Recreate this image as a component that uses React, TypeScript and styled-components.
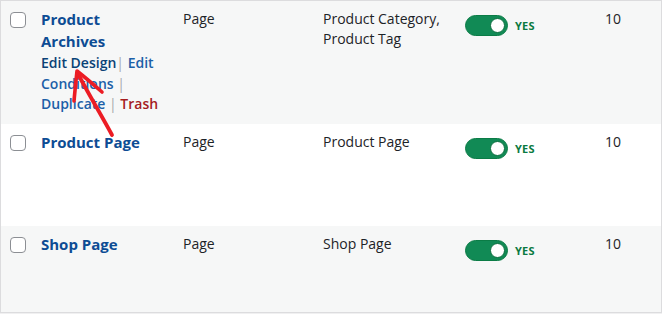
import styled, { createGlobalStyle } from 'styled-components';

const GlobalStyle = createGlobalStyle`
  html, body {
    margin: 0;
    padding: 0;
    background: #f0f0f1;
  }
  body {
    font-family: "Open Sans", "Noto Sans", Arial, sans-serif;
    color: #1d2327;
  }
`;

interface Template {
  title: string,
  type: string,
  conditions: string,
  priority: number,
  height: number,
  striped: boolean,
  actions?: boolean
}

const templates: Template[] = [
  {
    title: 'Product Archives', type: 'Page',
    conditions: 'Product Category, Product Tag',
    priority: 10, height: 123, striped: true, actions: true
  },
  {
    title: 'Product Page', type: 'Page', conditions: 'Product Page',
    priority: 10, height: 102, striped: false
  },
  {
    title: 'Shop Page', type: 'Page', conditions: 'Shop Page',
    priority: 10, height: 86, striped: true
  }
];

function Toggle(){
  return (
    <ToggleWrap>
      <Track><Knob /></Track>
      <YesLabel>YES</YesLabel>
    </ToggleWrap>
  );
}

function RowActions(){
  return (
    <Actions>
      <ActionLink is_active>Edit Design</ActionLink><Sep>| </Sep>
      <ActionLink>Edit Conditions</ActionLink><Sep> | </Sep>
      <ActionLink>Duplicate</ActionLink><Sep> | </Sep>
      <ActionLink is_danger>Trash</ActionLink>
    </Actions>
  );
}

// hand drawn red arrow pointing at "Edit Design"
function Arrow(){
  return (
    <ArrowSvg width="662" height="314" viewBox="0 0 662 314">
      <path
        d="M112 135 C 104 120, 92 100, 78 74"
        fill="none" stroke="#ec1c24" strokeWidth="3.8" strokeLinecap="round"
      />
      <path
        d="M74 101 C 75 90, 76 80, 77 71 C 86 78, 94 85, 102 92"
        fill="none" stroke="#ec1c24" strokeWidth="3.6"
        strokeLinecap="round" strokeLinejoin="round"
      />
    </ArrowSvg>
  );
}

export default function App(){
  return (
    <>
      <GlobalStyle />
      <Page>
        <Table>
          {templates.map((t) => (
            <Row key={t.title} striped={t.striped} height={t.height}>
              <CheckCell><Checkbox /></CheckCell>
              <TitleCell>
                <Title>{t.title}</Title>
                {t.actions && <RowActions />}
              </TitleCell>
              <Cell>{t.type}</Cell>
              <Cell>{t.conditions}</Cell>
              <Cell><Toggle /></Cell>
              <Cell>{t.priority}</Cell>
            </Row>
          ))}
        </Table>
        <Arrow />
      </Page>
    </>
  );
}

const Page = styled.div`
  position: relative;
  width: 662px;
  height: 314px;
  overflow: hidden;
`;
const Table = styled.div`
  border: 1px solid #dcdcde;
  display: flex;
  flex-direction: column;
`;
const Row = styled.div((props: { striped: boolean, height: number }) => `
  display: grid;
  grid-template-columns: 40px 142px 140px 142px 140px 1fr;
  height: ${props.height}px;
  box-sizing: border-box;
  background: ${props.striped ? '#f6f7f7' : '#ffffff'};
  font-size: 14px;
  line-height: 20px;
`);
const Cell = styled.div`
  padding-top: 8px;
`;
const CheckCell = styled.div`
  padding: 11px 0 0 9px;
`;
const Checkbox = styled.div`
  width: 14px;
  height: 14px;
  border: 1px solid #8c8f94;
  border-radius: 4px;
  background: #fff;
`;
const TitleCell = styled.div`
  padding: 7px 18px 0 0;
`;
const Title = styled.div`
  font-size: 15px;
  font-weight: 700;
  line-height: 22px;
  color: #0d4c94;
`;
const Actions = styled.div`
  font-size: 14px;
  font-weight: 600;
  line-height: 20.5px;
  margin-top: 1px;
`;
const ActionLink = styled.span((props: { is_active?: boolean, is_danger?: boolean }) => `
  color: ${props.is_danger ? '#a51d1f' : props.is_active ? '#0a4276' : '#1c5fa8'};
`);
const Sep = styled.span`
  color: #a7aaad;
  font-weight: 400;
`;
const ToggleWrap = styled.div`
  display: flex;
  align-items: center;
  gap: 7px;
  margin-top: 6px;
`;
const Track = styled.div`
  width: 43px;
  height: 21px;
  box-sizing: border-box;
  border-radius: 11px;
  background: #118a55;
  border: 1px solid #0b7c46;
  display: flex;
  align-items: center;
  justify-content: flex-end;
  padding-right: 2px;
`;
const Knob = styled.div`
  width: 15px;
  height: 15px;
  border-radius: 50%;
  background: #fff;
  border: 1px solid #0b6e3e;
  box-sizing: border-box;
`;
const YesLabel = styled.span`
  font-size: 11px;
  font-weight: 700;
  color: #0a7a41;
  letter-spacing: 0.2px;
`;
const ArrowSvg = styled.svg`
  position: absolute;
  left: 0;
  top: 0;
  pointer-events: none;
`;
